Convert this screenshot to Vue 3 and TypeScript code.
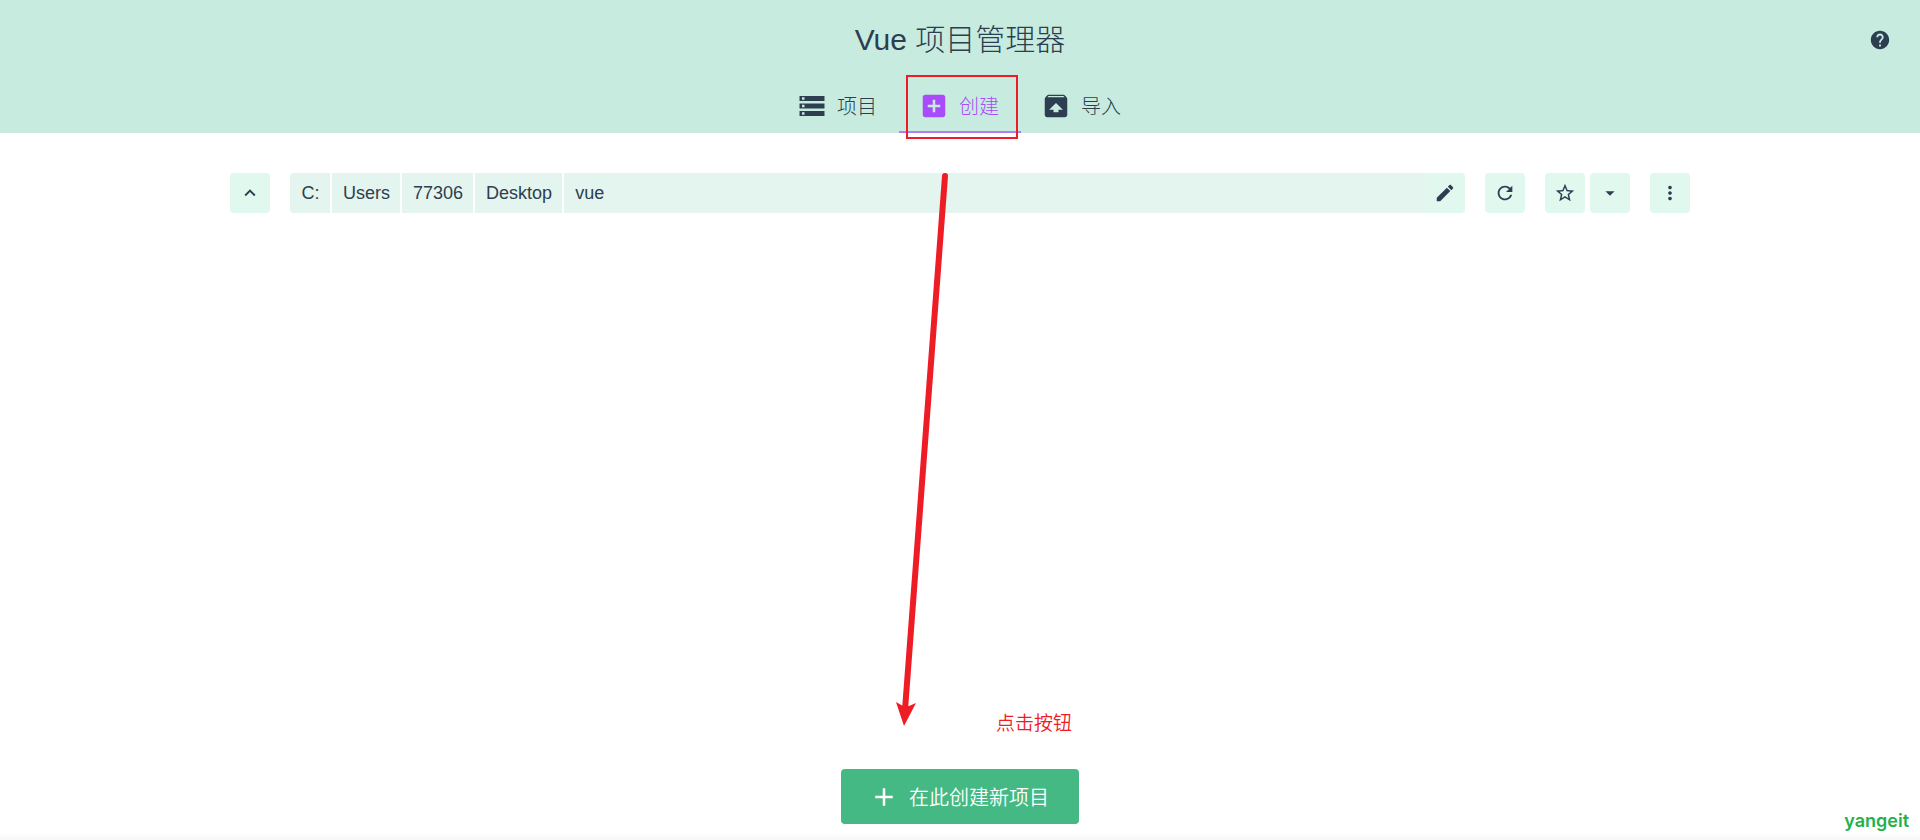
<script setup lang="ts">
import { ref } from 'vue'

interface Tab {
  id: string
  label: string
  icon: string
}

const tabs: Tab[] = [
  { id: 'projects', label: '项目', icon: 'M2 20h20v-4H2v4zm2-3h2v2H4v-2zM2 4v4h20V4H2zm4 3H4V5h2v2zm-4 7h20v-4H2v4zm2-3h2v2H4v-2z' },
  { id: 'create', label: '创建', icon: 'M19 3H5c-1.11 0-2 .9-2 2v14c0 1.1.89 2 2 2h14c1.1 0 2-.9 2-2V5c0-1.1-.9-2-2-2zm-2 10h-4v4h-2v-4H7v-2h4V7h2v4h4v2z' },
  { id: 'import', label: '导入', icon: 'M20.55 5.22l-1.39-1.68C18.88 3.21 18.47 3 18 3H6c-.47 0-.88.21-1.15.55L3.46 5.22C3.17 5.57 3 6.01 3 6.5V19c0 1.1.89 2 2 2h14c1.1 0 2-.9 2-2V6.5c0-.49-.17-.93-.45-1.28zM12 9.5l5.5 5.5H14v2h-4v-2H6.5L12 9.5zM5.12 5l.82-1h12l.93 1H5.12z' },
]
const active = ref('create')
const folders: string[] = ['C:', 'Users', '77306', 'Desktop', 'vue']
</script>

<template>
  <div class="page">
    <header class="header">
      <h1 class="title">Vue 项目管理器</h1>
      <button class="help" type="button" aria-label="帮助">
        <svg viewBox="0 0 24 24"><path d="M12 2C6.48 2 2 6.48 2 12s4.48 10 10 10 10-4.48 10-10S17.52 2 12 2zm1 17h-2v-2h2v2zm2.07-7.75l-.9.92C13.45 12.9 13 13.5 13 15h-2v-.5c0-1.1.45-2.1 1.17-2.83l1.24-1.26c.37-.36.59-.86.59-1.41 0-1.1-.9-2-2-2s-2 .9-2 2H8c0-2.21 1.79-4 4-4s4 1.79 4 4c0 .88-.36 1.68-.93 2.25z" /></svg>
      </button>
      <nav class="tabs">
        <button
          v-for="tab in tabs"
          :key="tab.id"
          type="button"
          class="tab"
          :class="{ active: tab.id === active }"
          @click="active = tab.id"
        >
          <svg viewBox="0 0 24 24"><path :d="tab.icon" /></svg>
          <span>{{ tab.label }}</span>
        </button>
      </nav>
    </header>

    <main class="content">
      <div class="toolbar">
        <button class="icon-button" type="button" aria-label="上级目录">
          <svg viewBox="0 0 24 24"><path d="M7.41 15.41L12 10.83l4.59 4.58L18 14l-6-6-6 6z" /></svg>
        </button>
        <div class="path">
          <button v-for="folder in folders" :key="folder" type="button" class="folder">{{ folder }}</button>
          <button class="icon-button edit" type="button" aria-label="编辑路径">
            <svg viewBox="0 0 24 24"><path d="M3 17.25V21h3.75L17.81 9.94l-3.75-3.75L3 17.25zM20.71 7.04c.39-.39.39-1.02 0-1.41l-2.34-2.34c-.39-.39-1.02-.39-1.41 0l-1.83 1.83 3.75 3.75 1.83-1.83z" /></svg>
          </button>
        </div>
        <button class="icon-button" type="button" aria-label="刷新">
          <svg viewBox="0 0 24 24"><path d="M17.65 6.35C16.2 4.9 14.21 4 12 4c-4.42 0-7.99 3.58-7.99 8s3.57 8 7.99 8c3.73 0 6.84-2.55 7.73-6h-2.08c-.82 2.33-3.04 4-5.65 4-3.31 0-6-2.69-6-6s2.69-6 6-6c1.66 0 3.14.69 4.22 1.78L13 11h7V4l-2.35 2.35z" /></svg>
        </button>
        <div class="group">
          <button class="icon-button" type="button" aria-label="收藏">
            <svg viewBox="0 0 24 24"><path d="M22 9.24l-7.19-.62L12 2 9.19 8.63 2 9.24l5.46 4.73L5.82 21 12 17.27 18.18 21l-1.63-7.03L22 9.24zM12 15.4l-3.76 2.27 1-4.28-3.32-2.88 4.38-.38L12 6.1l1.71 4.04 4.38.38-3.32 2.88 1 4.28L12 15.4z" /></svg>
          </button>
          <button class="icon-button" type="button" aria-label="收藏列表">
            <svg viewBox="0 0 24 24"><path d="M7 10l5 5 5-5z" /></svg>
          </button>
        </div>
        <button class="icon-button" type="button" aria-label="更多">
          <svg viewBox="0 0 24 24"><path d="M12 8c1.1 0 2-.9 2-2s-.9-2-2-2-2 .9-2 2 .9 2 2 2zm0 2c-1.1 0-2 .9-2 2s.9 2 2 2 2-.9 2-2-.9-2-2-2zm0 6c-1.1 0-2 .9-2 2s.9 2 2 2 2-.9 2-2-.9-2-2-2z" /></svg>
        </button>
      </div>

      <button class="create" type="button">
        <svg viewBox="0 0 24 24"><path d="M19 13h-6v6h-2v-6H5v-2h6V5h2v6h6v2z" /></svg>
        <span>在此创建新项目</span>
      </button>
    </main>

    <div class="footer-edge"></div>

    <div class="annotations">
      <div class="highlight"></div>
      <svg class="arrow" viewBox="0 0 60 560" aria-hidden="true">
        <path d="M50 10L10 544" fill="none" stroke="#ee1c25" stroke-width="6" stroke-linecap="round" />
        <path d="M1 536L8 540L14 540L21 537L9 560Z" fill="#ee1c25" />
      </svg>
      <p class="note">点击按钮</p>
      <span class="watermark">yangeit</span>
    </div>
  </div>
</template>

<style>
body {
  margin: 0;
}
</style>

<style scoped>
.page {
  position: relative;
  display: flex;
  flex-direction: column;
  min-height: 100vh;
  background: #fff;
  color: #2c3e50;
  font-family: "Liberation Sans", "Noto Sans CJK SC", sans-serif;
  font-size: 18px;
}

button {
  margin: 0;
  padding: 0;
  border: 0;
  background: none;
  color: inherit;
  font: inherit;
  cursor: pointer;
}

svg {
  display: block;
  fill: currentColor;
}

.header {
  position: relative;
  display: flex;
  flex-direction: column;
  align-items: center;
  background: #c8ebdf;
}

.title {
  margin: 0;
  padding: 20px 0;
  font-size: 30px;
  font-weight: 300;
  line-height: 40px;
}

.help {
  position: absolute;
  top: 29px;
  right: 29px;
}

.help svg {
  width: 22px;
  height: 22px;
}

.tabs {
  display: flex;
}

.tab {
  display: flex;
  align-items: center;
  gap: 10px;
  height: 53px;
  padding: 0 22px 0 20px;
  border-bottom: 2px solid transparent;
  box-sizing: border-box;
  font-size: 20px;
  font-weight: 300;
}

.tab svg {
  width: 30px;
  height: 30px;
}

.tab.active {
  border-bottom-color: #b57bf3;
  color: #a84cfb;
}

.content {
  flex: 1;
  display: flex;
  flex-direction: column;
  align-items: center;
  justify-content: space-between;
  padding: 40px 230px 8px;
}

.toolbar {
  display: flex;
  gap: 20px;
  width: 100%;
}

.group {
  display: flex;
  gap: 5px;
}

.icon-button {
  display: flex;
  align-items: center;
  justify-content: center;
  width: 40px;
  height: 40px;
  border-radius: 4px;
  background: #e0f8ed;
}

.icon-button svg {
  width: 22px;
  height: 22px;
}

.path {
  flex: 1;
  display: flex;
  gap: 2px;
  overflow: hidden;
  border-radius: 4px;
}

.folder {
  min-width: 40px;
  height: 40px;
  padding: 0 10px 0 11px;
  background: #e4f4ee;
}

.folder:nth-last-child(2) {
  flex: 1;
  margin-right: -2px;
  text-align: left;
}

.edit {
  border-radius: 0;
}

.create {
  display: flex;
  align-items: center;
  gap: 10px;
  height: 55px;
  padding: 0 30px 0 28px;
  border-radius: 4px;
  background: #44b984;
  color: #fff;
  font-size: 20px;
  font-weight: 350;
}

.create svg {
  width: 30px;
  height: 30px;
}

.footer-edge {
  height: 8px;
  background: linear-gradient(#fff, #f7f7f7);
}

.annotations {
  position: absolute;
  inset: 0;
  pointer-events: none;
  color: #ee1c25;
}

.highlight {
  position: absolute;
  top: 75px;
  left: calc(50% - 54px);
  width: 112px;
  height: 64px;
  border: 2px solid currentColor;
  box-sizing: border-box;
}

.arrow {
  position: absolute;
  top: 166px;
  left: calc(50% - 65px);
  width: 60px;
  height: 560px;
}

.note {
  position: absolute;
  top: 710px;
  left: calc(50% + 36px);
  margin: 0;
  font-size: 19px;
  font-weight: 350;
  line-height: 28px;
}

.watermark {
  position: absolute;
  right: 11px;
  bottom: 7px;
  color: #22b14c;
  font-family: Inter, sans-serif;
  font-size: 18px;
  font-weight: 600;
  line-height: 24px;
}
</style>
